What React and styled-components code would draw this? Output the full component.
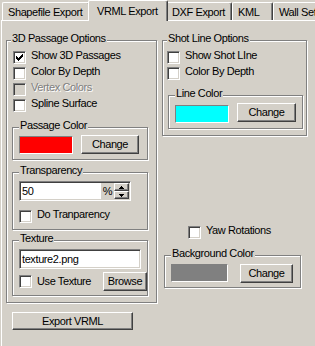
import React from "react";
import styled, { createGlobalStyle, css } from "styled-components";

const GlobalStyle = createGlobalStyle`
  html, body { margin: 0; padding: 0; background: #d4d0c8; }
  body {
    font-family: "Liberation Sans", Arial, sans-serif;
    font-size: 11px;
    color: #000;
  }
`;

// win2k bevels
const raised = css`
  border: 1px solid;
  border-color: #fff #404040 #404040 #fff;
  box-shadow: inset -1px -1px #808080;
`;

const sunken = css`
  border: 1px solid;
  border-color: #808080 #fff #fff #808080;
  box-shadow: inset 1px 1px #404040, inset -1px -1px #d4d0c8;
`;

const Window = styled.div`
  width: 315px;
  height: 346px;
  overflow: hidden;
  background: #d4d0c8;
  letter-spacing: -0.4px;
`;

const TabStrip = styled.div`
  display: flex;
  align-items: flex-end;
  height: 20px;
  padding-left: 2px;
  position: relative;
  z-index: 1;
`;

const Tab = styled.div`
  position: relative;
  z-index: ${p => (p.$active ? 2 : 1)};
  box-sizing: border-box;
  flex: none;
  width: ${p => p.$w}px;
  height: ${p => (p.$active ? 21 : 18)}px;
  margin: ${p => (p.$active ? "0 -2px -1px" : "0")};
  padding: ${p => (p.$active ? "4px 0 0 8px" : "3px 0 0 5px")};
  background: #d4d0c8;
  border-top: 1px solid #fff;
  border-left: 1px solid #fff;
  border-right: 1px solid #404040;
  border-radius: 2px 2px 0 0;
  box-shadow: inset -1px 0 #808080;
  line-height: 13px;
  white-space: nowrap;
`;

const Panel = styled.div`
  height: 330px;
  margin-left: 1px;
  padding: 19px 0 0 4px;
  border-top: 1px solid #fff;
  border-left: 1px solid #fff;
`;

const Columns = styled.div`
  display: flex;
  align-items: flex-start;
  gap: 5px;
`;

const Column = styled.div`
  display: flex;
  flex-direction: column;
  align-items: flex-start;
`;

const GroupBox = styled.div`
  position: relative;
  box-sizing: border-box;
  flex: none;
  width: ${p => p.$w}px;
  height: ${p => (p.$h ? `${p.$h}px` : "auto")};
  margin: ${p => p.$m || "0"};
  padding: ${p => p.$pad || "8px 0 0 0"};
  border: 1px solid #808080;
  box-shadow: inset 1px 1px #fff, 1px 1px #fff;
`;

const Legend = styled.span`
  position: absolute;
  top: -9px;
  left: ${p => p.$x ?? 6}px;
  padding: 0 1px;
  background: #d4d0c8;
  line-height: 13px;
  white-space: nowrap;
`;

const CheckRow = styled.div`
  display: flex;
  align-items: flex-start;
  gap: 5px;
  height: 16px;
  margin: ${p => p.$m || "0 0 0 1px"};
`;

const Box = styled.span`
  box-sizing: border-box;
  flex: none;
  width: 13px;
  height: 13px;
  margin-top: ${p => p.$mt ?? 2}px;
  display: flex;
  align-items: center;
  justify-content: center;
  background: ${p => (p.$disabled ? "#d4d0c8" : "#fff")};
  ${sunken};
`;

const Label = styled.span`
  line-height: 13px;
  white-space: nowrap;
  color: ${p => (p.$disabled ? "#808080" : "#000")};
  text-shadow: ${p => (p.$disabled ? "1px 1px #fff" : "none")};
`;

const InlineLabel = styled(Label)`
  flex: 1;
  margin-left: 5px;
`;

const Row = styled.div`
  display: flex;
  align-items: ${p => p.$align || "flex-start"};
  gap: ${p => p.$gap || 0}px;
  margin-top: ${p => p.$mt || 0}px;
`;

const Swatch = styled.span`
  box-sizing: border-box;
  flex: none;
  width: ${p => p.$w}px;
  height: 18px;
  margin-top: ${p => p.$mt || 0}px;
  background: ${p => p.$color};
  border: 1px solid;
  border-color: #808080 #fff #fff #808080;
`;

const Button = styled.button`
  box-sizing: border-box;
  flex: none;
  width: ${p => p.$w}px;
  height: ${p => p.$h || 19}px;
  margin: ${p => p.$m || "0"};
  padding: 0;
  background: #d4d0c8;
  color: #000;
  font: inherit;
  letter-spacing: inherit;
  line-height: 13px;
  ${raised};
`;

const TextBox = styled.input`
  box-sizing: border-box;
  width: ${p => p.$w}px;
  height: 20px;
  margin: 0;
  padding: 0 0 0 2px;
  background: #fff;
  color: #000;
  font: inherit;
  letter-spacing: inherit;
  outline: none;
  ${sunken};
`;

const Field = styled.div`
  box-sizing: border-box;
  display: flex;
  width: 112px;
  height: 20px;
  padding: 1px;
  background: #fff;
  ${sunken};
`;

const FieldInput = styled.input`
  box-sizing: border-box;
  width: 80px;
  height: 100%;
  margin: 0;
  padding: 0 0 0 1px;
  border: 0;
  background: #fff;
  font: inherit;
  letter-spacing: inherit;
  outline: none;
`;

const Suffix = styled.span`
  width: 13px;
  background: #d4d0c8;
  display: flex;
  align-items: center;
  justify-content: center;
`;

const Spin = styled.div`
  width: 15px;
  display: flex;
  flex-direction: column;
`;

const SpinButton = styled.span`
  box-sizing: border-box;
  flex: 1;
  display: flex;
  align-items: center;
  justify-content: center;
  background: #d4d0c8;
  ${raised};
`;

const Check = () => (
  <svg width="7" height="7" viewBox="0 0 7 7" shapeRendering="crispEdges">
    {[2, 3, 4, 3, 2, 1, 0].map((y, x) => (
      <rect key={x} x={x} y={y} width="1" height="3" fill="#000" />
    ))}
  </svg>
);

const Arrow = ({ down }) => (
  <svg width="5" height="3" viewBox="0 0 5 3" shapeRendering="crispEdges">
    <polygon points={down ? "0,0 5,0 2.5,3" : "2.5,0 5,3 0,3"} fill="#000" />
  </svg>
);

const CheckBox = ({ label, checked, disabled, m }) => (
  <CheckRow $m={m}>
    <Box $disabled={disabled}>{checked && <Check />}</Box>
    <Label $disabled={disabled}>{label}</Label>
  </CheckRow>
);

const tabs = [
  { name: "Shapefile Export", w: 88 },
  { name: "VRML Export", w: 80, active: true },
  { name: "DXF Export", w: 66 },
  { name: "KML", w: 41 },
  { name: "Wall Settings", w: 80 },
];

export default function App() {
  return (
    <>
      <GlobalStyle />
      <Window>
        <TabStrip>
          {tabs.map(t => (
            <Tab key={t.name} $w={t.w} $active={t.active}>{t.name}</Tab>
          ))}
        </TabStrip>
        <Panel>
          <Columns>
            <Column>
              <GroupBox $w={151} $h={263} $pad="8px 0 0 5px">
                <Legend $x={4}>3D Passage Options</Legend>
                <CheckBox label="Show 3D Passages" checked />
                <CheckBox label="Color By Depth" />
                <CheckBox label="Vertex Colors" disabled />
                <CheckBox label="Spline Surface" />

                <GroupBox $w={136} $m="14px 0 0 0" $pad="7px 0 5px 6px">
                  <Legend>Passage Color</Legend>
                  <Row $gap={8}>
                    <Swatch $w={54} $mt={1} $color="#ff0000" />
                    <Button $w={58}>Change</Button>
                  </Row>
                </GroupBox>

                <GroupBox $w={136} $m="12px 0 0 0" $pad="8px 0 5px 6px">
                  <Legend>Transparency</Legend>
                  <Field>
                    <FieldInput readOnly value="50" />
                    <Suffix>%</Suffix>
                    <Spin>
                      <SpinButton><Arrow /></SpinButton>
                      <SpinButton><Arrow down /></SpinButton>
                    </Spin>
                  </Field>
                  <CheckBox label="Do Tranparency" m="7px 0 0 0" />
                </GroupBox>

                <GroupBox $w={136} $m="10px 0 0 0" $pad="8px 0 4px 6px">
                  <Legend>Texture</Legend>
                  <TextBox $w={122} readOnly value="texture2.png" />
                  <Row $mt={3} $align="center">
                    <Box $mt={0} />
                    <InlineLabel>Use Texture</InlineLabel>
                    <Button $w={44}>Browse</Button>
                  </Row>
                </GroupBox>
              </GroupBox>
              <Button $w={121} $h={18} $m="9px 0 0 6px">Export VRML</Button>
            </Column>

            <Column>
              <GroupBox $w={145} $h={96} $pad="8px 0 0 4px">
                <Legend $x={4}>Shot Line Options</Legend>
                <CheckBox label="Show Shot LIne" m="0" />
                <CheckBox label="Color By Depth" m="0" />
                <GroupBox $w={135} $m="14px 0 0 1px" $pad="7px 0 5px 6px">
                  <Legend>Line Color</Legend>
                  <Row $gap={8}>
                    <Swatch $w={54} $mt={2} $color="#00ffff" />
                    <Button $w={59}>Change</Button>
                  </Row>
                </GroupBox>
              </GroupBox>

              <CheckBox label="Yaw Rotations" m="88px 0 0 26px" />

              <GroupBox $w={137} $m="15px 0 0 2px" $pad="8px 0 4px 6px">
                <Legend>Background Color</Legend>
                <Row $gap={12}>
                  <Swatch $w={57} $color="#808080" />
                  <Button $w={53}>Change</Button>
                </Row>
              </GroupBox>
            </Column>
          </Columns>
        </Panel>
      </Window>
    </>
  );
}
